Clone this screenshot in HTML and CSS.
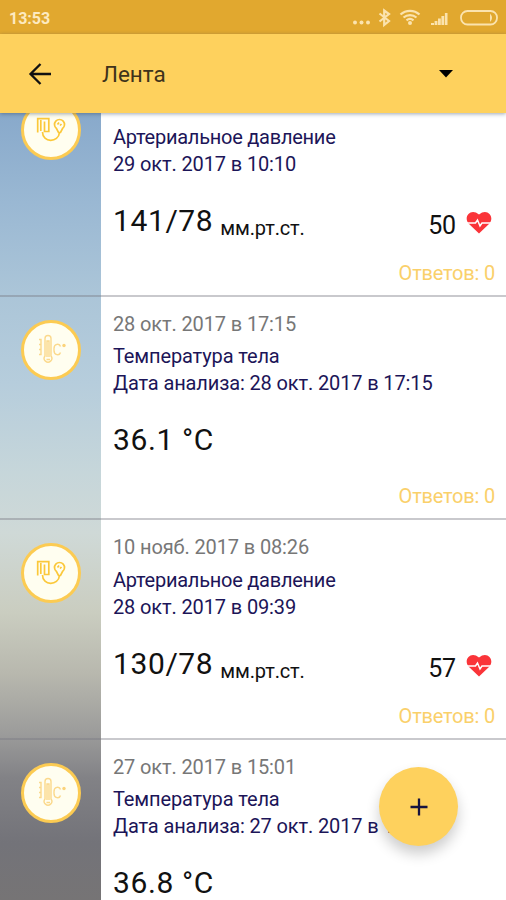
FILE: index.html
```html
<!DOCTYPE html>
<html lang="ru">
<head>
    <meta charset="UTF-8">
    <meta name="viewport" content="width=device-width, initial-scale=1.0">
    <title>Лента</title>
    <link rel="stylesheet" href="styles.css">
</head>
<body>
    <!-- Icons shared by the cards -->
    <svg class="icon-defs" width="0" height="0">
        <symbol id="icon-pressure" viewBox="0 0 30 26">
            <g fill="none" stroke="#fbc83a" stroke-width="1.7">
                <path d="M1.7 15.500V1.700H12.800V14.500H8.500V4.500M4.800 3V14"/>
                <path d="M20.500 11.500A5 5 0 1 1 26.500 11.500L24.500 15.500H22.500z"/>
                <path d="M21.500 7.500l1.500-2M24 8.500l1.500-1.500"/>
                <path d="M6.500 15c0 11 16 11 17 0.500"/>
            </g>
        </symbol>
        <symbol id="icon-thermometer" viewBox="0 0 30 32">
            <g fill="none" stroke="#fbd98c" stroke-width="1.4">
                <path d="M9 22V4.500a3 3 0 0 1 6 0V22a3.800 3.800 0 1 1-6 0z"/>
                <path d="M11 23V7h2v16M10.500 25.500h3.500"/>
                <path d="M3 5.500h2v5h-2M5 10.500v5h-2M5 15.500v5h-2"/>
                <path d="M24.500 12.500c-1-3.500-6.500-3-6.500 2v2c0 5 5.500 5.500 6.500 2"/>
            </g>
            <circle cx="28" cy="11.500" r="1.7" fill="#fbd37a"/>
        </symbol>
        <symbol id="icon-heart" viewBox="0 0 26 23">
            <path d="M13 22.500 2.500 12.500C-3 5.500 5-3.500 13 3.500 21-3.500 29 5.500 23.500 12.500z" fill="#fa3439"/>
            <path d="M0 12h9.500l2-3 2.500 6 2-3H26" fill="none" stroke="#fff" stroke-width="1.5"/>
        </symbol>
    </svg>

    <div class="status-bar">
        <span class="status-time">13:53</span>
        <div class="status-icons">
            <svg width="148" height="20" viewBox="0 0 148 20">
                <g fill="#fbe3ae">
                    <circle cx="4" cy="14.5" r="2"/>
                    <circle cx="10.5" cy="14.5" r="2"/>
                    <circle cx="17" cy="14.5" r="2"/>
                    <path d="M80 17v-2h3v2zM83.600 17v-4h2.800v4zM87 17V10.500h2.800V17zM90.400 17V8h2.800v9zM93.900 17V5h2.600v12z"/>
                    <circle cx="59" cy="15" r="2"/>
                    <path d="M139 5.500q4 4.500 0 8.500z"/>
                </g>
                <g fill="none" stroke="#fbe3ae" stroke-width="2.2">
                    <path d="M28.500 5.500 38 13 33.200 17V2.500L38 6l-9.500 7.500"/>
                    <path d="M49.500 6.500a14 14 0 0 1 19 0M52.500 9.500a10 10 0 0 1 13 0M55.500 12.300a5.500 5.500 0 0 1 7 0"/>
                    <rect x="110" y="3" width="36" height="13.5" rx="6.500" stroke-width="1.8"/>
                </g>
            </svg>
        </div>
    </div>

    <header class="toolbar">
        <svg class="back-icon" width="24" height="24" viewBox="0 0 24 24">
            <path d="M12.500 2 2.500 12l10 10M2.500 12H23" fill="none" stroke="#111" stroke-width="2.3"/>
        </svg>
        <h1 class="toolbar-title">Лента</h1>
        <svg class="menu-icon" width="14" height="8" viewBox="0 0 14 8">
            <path d="M0 0h14L7 7.500z" fill="#000"/>
        </svg>
    </header>

    <main class="feed">
        <div class="feed-list">
            <article class="card pressure">
                <div class="card-side"><span class="badge"><svg width="30" height="26"><use href="#icon-pressure"/></svg></span></div>
                <div class="card-body">
                    <p class="card-date"></p>
                    <p class="card-title title-pressure">Артериальное давление</p>
                    <p class="card-title">29 окт. 2017 в 10:10</p>
                    <div class="card-values">
                        <span class="value">141/78</span>
                        <span class="unit">мм.рт.ст.</span>
                        <span class="pulse">50</span>
                        <svg class="heart" width="26" height="23"><use href="#icon-heart"/></svg>
                    </div>
                    <p class="answers">Ответов: 0</p>
                </div>
            </article>

            <article class="card temperature">
                <div class="card-side"><span class="badge"><svg width="30" height="32"><use href="#icon-thermometer"/></svg></span></div>
                <div class="card-body">
                    <p class="card-date">28 окт. 2017 в 17:15</p>
                    <p class="card-title">Температура тела</p>
                    <p class="card-title">Дата анализа: 28 окт. 2017 в 17:15</p>
                    <div class="card-values">
                        <span class="value">36.1 °C</span>
                    </div>
                    <p class="answers">Ответов: 0</p>
                </div>
            </article>

            <article class="card pressure">
                <div class="card-side"><span class="badge"><svg width="30" height="26"><use href="#icon-pressure"/></svg></span></div>
                <div class="card-body">
                    <p class="card-date">10 нояб. 2017 в 08:26</p>
                    <p class="card-title title-pressure">Артериальное давление</p>
                    <p class="card-title">28 окт. 2017 в 09:39</p>
                    <div class="card-values">
                        <span class="value">130/78</span>
                        <span class="unit">мм.рт.ст.</span>
                        <span class="pulse">57</span>
                        <svg class="heart" width="26" height="23"><use href="#icon-heart"/></svg>
                    </div>
                    <p class="answers">Ответов: 0</p>
                </div>
            </article>

            <article class="card temperature">
                <div class="card-side"><span class="badge"><svg width="30" height="32"><use href="#icon-thermometer"/></svg></span></div>
                <div class="card-body">
                    <p class="card-date">27 окт. 2017 в 15:01</p>
                    <p class="card-title">Температура тела</p>
                    <p class="card-title">Дата анализа: 27 окт. 2017 в 15:01</p>
                    <div class="card-values">
                        <span class="value">36.8 °C</span>
                    </div>
                </div>
            </article>
        </div>
    </main>

    <button class="add-button" aria-label="Добавить">
        <svg width="18" height="18" viewBox="0 0 18 18">
            <path d="M9 0.500v17M0.500 9h17" stroke="#17133f" stroke-width="2.3"/>
        </svg>
    </button>
</body>
</html>
```

FILE: styles.css
```css
* {
    box-sizing: border-box;
}

body {
    margin: 0;
    height: 900px;
    display: flex;
    flex-direction: column;
    overflow: hidden;
    font-family: Roboto, "Noto Sans", sans-serif;
    background-color: #fff;
}

p, h1 {
    margin: 0;
}

.icon-defs {
    position: absolute;
}

/* Status bar */
.status-bar {
    flex: none;
    display: flex;
    justify-content: space-between;
    height: 34px;
    padding: 8px 7px 0 9px;
    background-color: #e1a82f;
}

.status-time {
    font-size: 16px;
    line-height: 21px;
    font-weight: bold;
    color: #fdeac0;
}

/* Toolbar */
.toolbar {
    flex: none;
    display: flex;
    align-items: center;
    height: 79px;
    padding: 0 53px 0 28px;
    background-color: #fed15d;
    box-shadow: 0 1px 4px rgba(40, 60, 90, 0.45);
    z-index: 1;
}

.toolbar-title {
    flex: 1;
    margin-left: 50px;
    font-size: 22.5px;
    font-weight: normal;
    color: #3f331b;
}

/* Feed */
.feed {
    flex: 1;
    min-height: 0;
    overflow: hidden;
    background: linear-gradient(#88a9cb 0, #9ab8d3 90px, #abc5d8 180px, #b6cddc 270px, #c6d6da 360px, #cfd9d7 420px, #cacdc0 500px, #b8b8ae 560px, #9c9c9b 620px, #828286 665px, #737379 730px, #767475 787px);
}

.feed-list {
    margin-top: -36px;
}

.card {
    display: flex;
    background: linear-gradient(to right, transparent 101px, #fff 101px);
    border-bottom: 2px solid rgba(120, 120, 130, 0.4);
}

.pressure {
    height: 220px;
}

.temperature {
    height: 223px;
}

.card-side {
    flex: none;
    width: 101px;
    padding: 23px 0 0 21px;
}

.badge {
    display: flex;
    align-items: center;
    justify-content: center;
    width: 60px;
    height: 60px;
    border: 3px solid #fccb52;
    border-radius: 50%;
    background-color: #fffef0;
}

.card-body {
    flex: 1;
    min-width: 0;
    padding: 14px 11px 0 12px;
    font-size: 20px;
    line-height: 27px;
    letter-spacing: -0.13px;
    white-space: nowrap;
}

.card-date {
    height: 27px;
    margin-bottom: 5px;
    color: #777;
}

.card-title {
    color: #1c1558;
}

.title-pressure {
    margin-top: 6px;
    letter-spacing: -0.25px;
}

.card-values {
    display: flex;
    align-items: baseline;
    height: 36px;
    margin-top: 25px;
    line-height: 36px;
    color: #111;
}

.value {
    font-size: 30px;
    letter-spacing: 0.6px;
}

.unit {
    margin-left: 7px;
    padding-top: 4px;
    align-self: flex-start;
    line-height: 42px;
}

.pulse {
    margin-left: auto;
    padding-top: 5px;
    align-self: flex-start;
    font-size: 25px;
}

.heart {
    align-self: center;
    margin: 2px 3px 0 10px;
}

.answers {
    margin-top: 25px;
    text-align: right;
    letter-spacing: -0.2px;
    color: #fad06a;
}

.pressure .answers {
    margin-top: 21px;
}

/* Floating button */
.add-button {
    position: absolute;
    right: 48px;
    bottom: 54px;
    display: flex;
    align-items: center;
    justify-content: center;
    width: 79px;
    height: 79px;
    padding: 0;
    border: none;
    border-radius: 50%;
    background-color: #fed15d;
    box-shadow: 0 8px 14px rgba(0, 0, 0, 0.2);
    z-index: 2;
}
```
